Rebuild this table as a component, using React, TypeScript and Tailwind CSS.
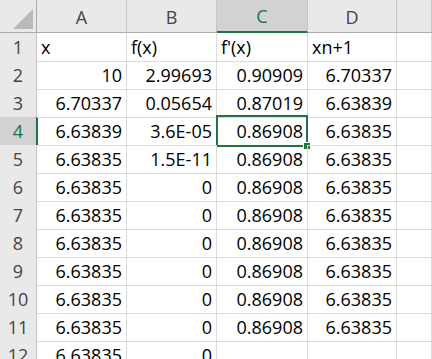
const cols = ['A', 'B', 'C', 'D', ''];

const rows: (string | number)[][] = [
  ['x', 'f(x)', "f'(x)", 'xn+1'],
  [10, 2.99693, 0.90909, 6.70337],
  [6.70337, 0.05654, 0.87019, 6.63839],
  [6.63839, '3.6E-05', 0.86908, 6.63835],
  [6.63835, '1.5E-11', 0.86908, 6.63835],
  [6.63835, 0, 0.86908, 6.63835],
  [6.63835, 0, 0.86908, 6.63835],
  [6.63835, 0, 0.86908, 6.63835],
  [6.63835, 0, 0.86908, 6.63835],
  [6.63835, 0, 0.86908, 6.63835],
  [6.63835, 0, 0.86908, 6.63835],
  [6.63835, 0, '', ''],
];

const gridCols = 'grid grid-cols-[37px_90px_90px_91px_89px_1fr]';

export default function App() {
  return (
    <div
      className="w-[432px] h-[359px] overflow-hidden bg-white text-[18px] text-black"
      style={{ fontFamily: '"Open Sans", "Noto Sans", sans-serif' }}
    >
      {/* column headers */}
      <div className={`${gridCols} h-[33px] bg-[#e9e9e9] border-b border-[#ababab]`}>
        <div className="relative border-r border-[#ababab]">
          <div className="absolute right-[3px] bottom-[3px] w-0 h-0 border-l-[20px] border-l-transparent border-b-[20px] border-b-[#b9b9b9]" />
        </div>
        {cols.map((c, i) =>
          c === 'C' ? (
            <div
              key={i}
              className="flex items-center justify-center bg-[#d2d2d2] border-r border-[#c6c6c6] border-b-2 border-b-[#217346] -mb-[1px] text-[#217346] pt-[2px]"
            >
              {c}
            </div>
          ) : (
            <div key={i} className="flex items-center justify-center border-r border-[#c6c6c6] text-[#444] pt-[2px]">
              {c}
            </div>
          )
        )}
      </div>

      {rows.map((r, ri) => {
        const sel = ri === 3;
        return (
          <div key={ri} className={`${gridCols} h-[28px]`}>
            <div
              className={
                sel
                  ? 'flex items-center justify-center bg-[#d2d2d2] border-r-2 border-r-[#217346] border-b border-[#c6c6c6] text-[#217346] -mr-[1px]'
                  : 'flex items-center justify-center bg-[#e9e9e9] border-r border-[#ababab] border-b border-[#c6c6c6] text-[#444]'
              }
            >
              {ri + 1}
            </div>
            {[0, 1, 2, 3, 4].map((ci) => {
              const v = r[ci];
              const isText = typeof v === 'string' && ri === 0;
              return (
                <div
                  key={ci}
                  className={`relative flex items-center border-r border-b border-[#dadada] whitespace-nowrap pt-[1px] ${
                    isText ? 'justify-start pl-[4px]' : 'justify-end pr-[4px]'
                  }`}
                >
                  {v === undefined ? '' : String(v)}
                  {sel && ci === 2 && (
                    <div className="absolute left-[-1px] top-[-2px] right-[-1px] bottom-[-2px] border-2 border-[#217346] pointer-events-none">
                      <div className="absolute right-[-4px] bottom-[-4px] w-[6px] h-[6px] bg-[#217346] outline outline-1 outline-white" />
                    </div>
                  )}
                </div>
              );
            })}
          </div>
        );
      })}
    </div>
  );
}
